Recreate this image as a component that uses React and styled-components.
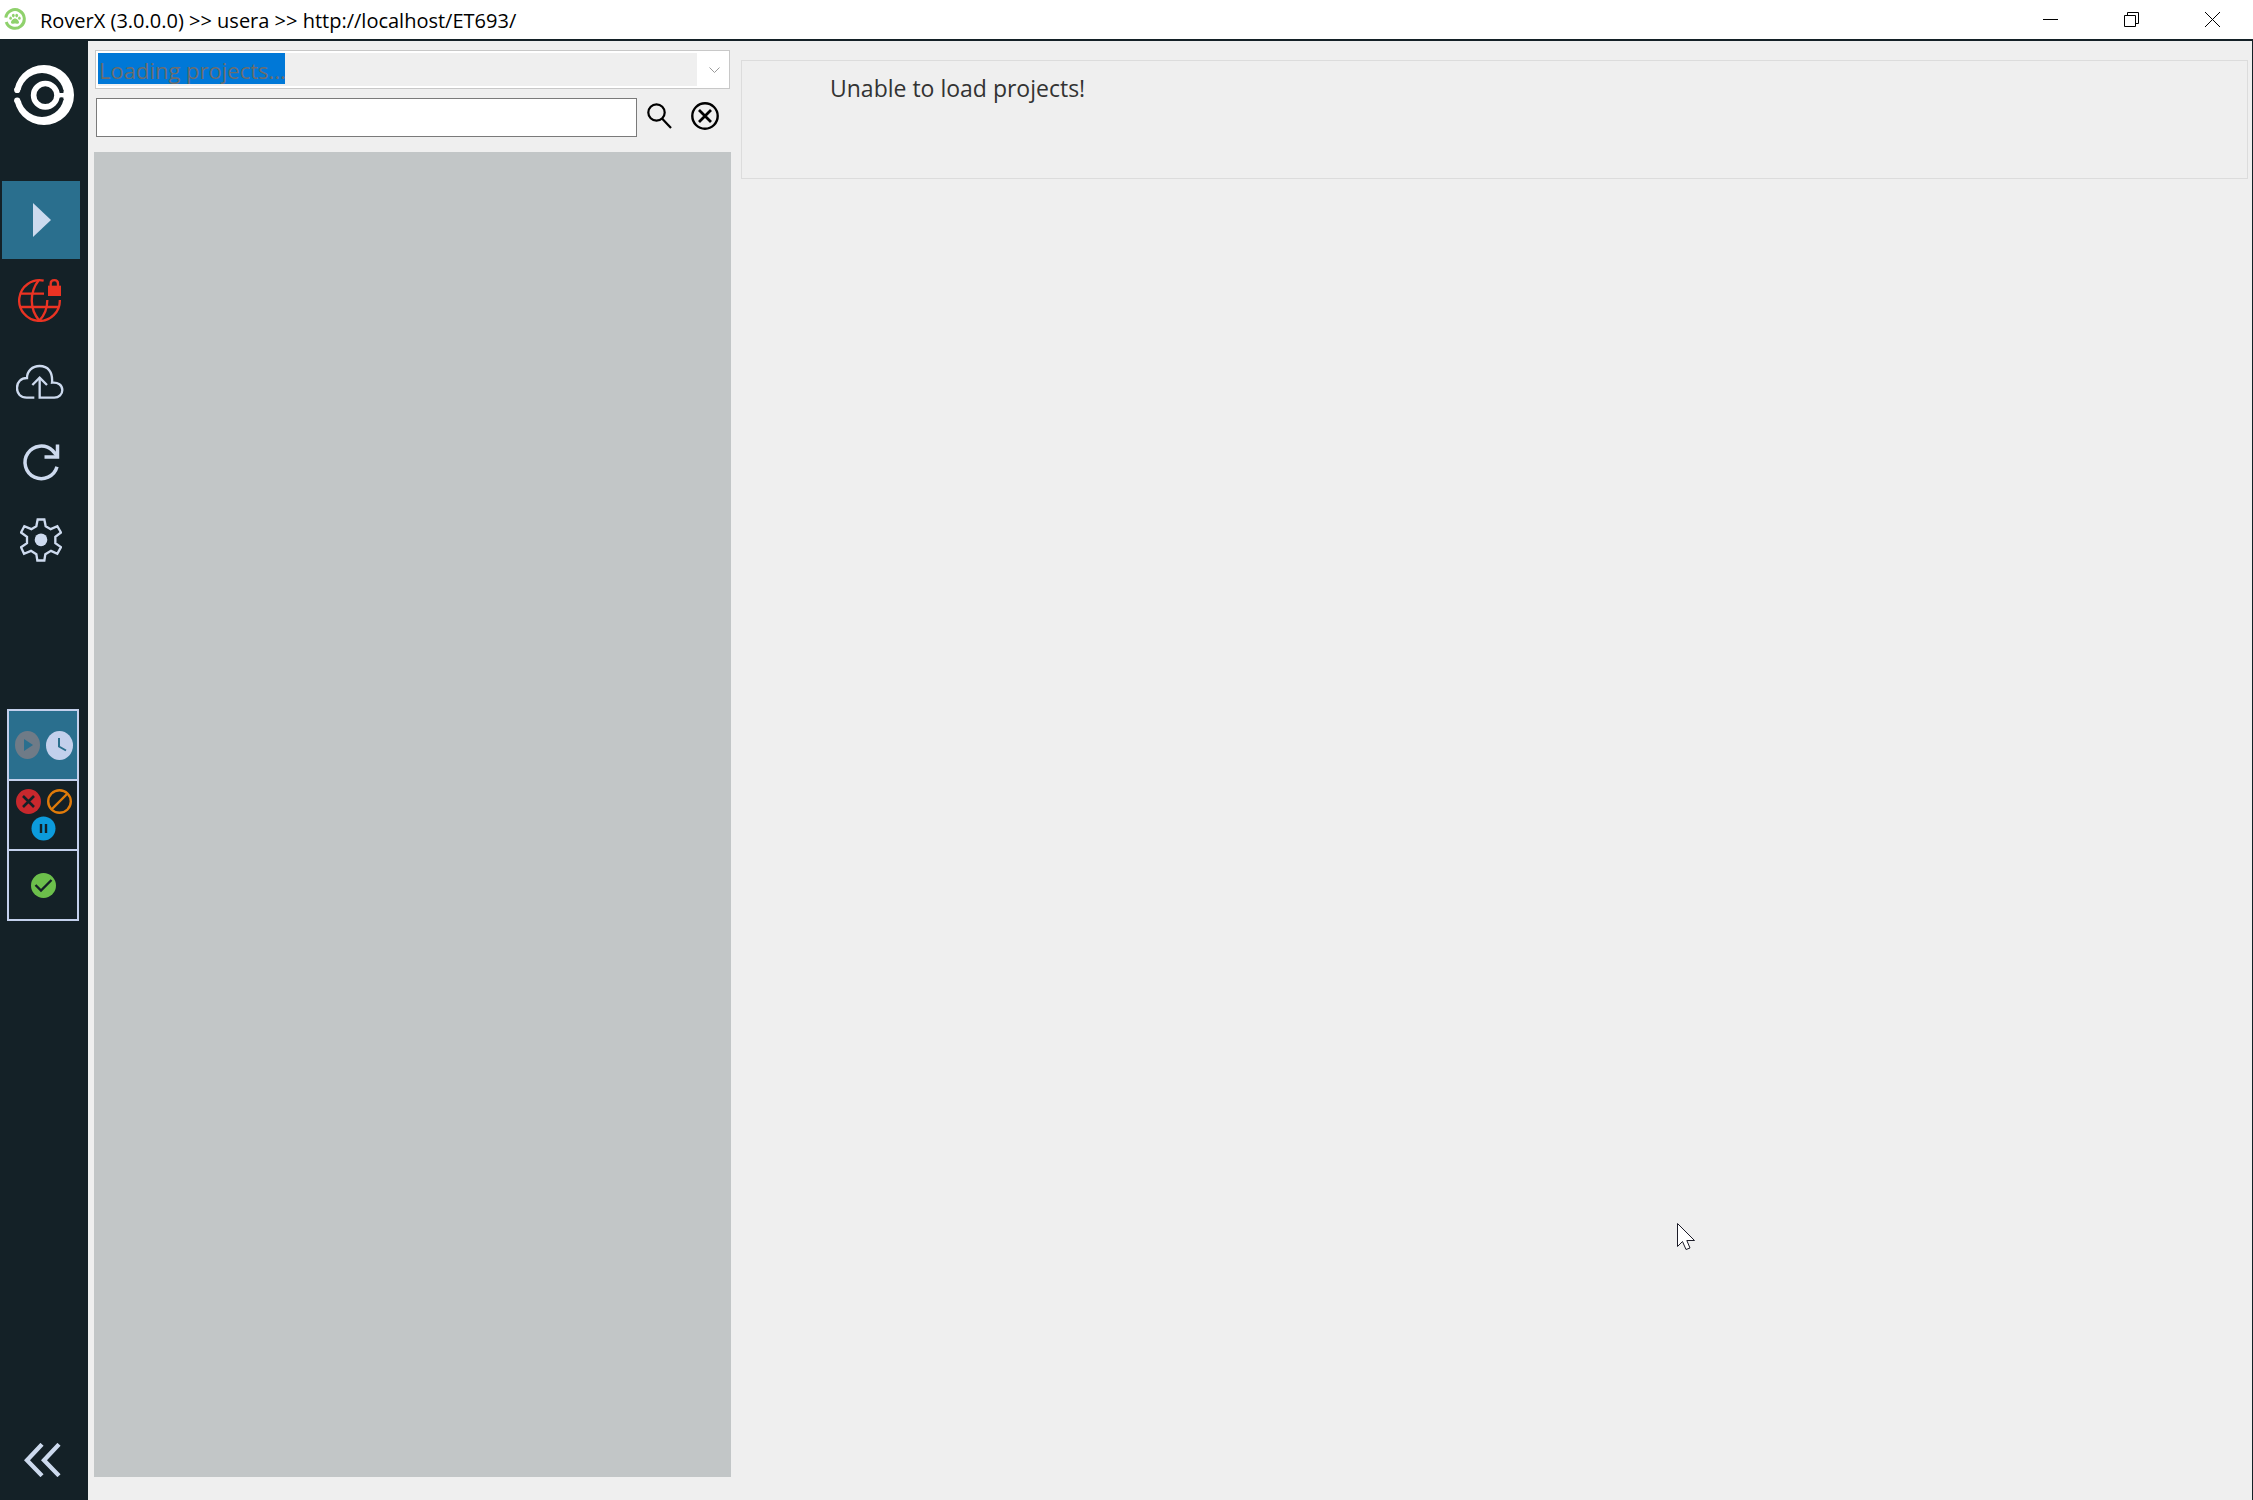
import styled, { createGlobalStyle } from 'styled-components';

const GlobalStyle = createGlobalStyle`
  * {
    box-sizing: border-box;
  }

  body {
    margin: 0;
    font-family: "Open Sans", "Noto Sans", sans-serif;
    background: #efefef;
  }

  button {
    padding: 0;
    border: 0;
    background: none;
  }

  svg {
    display: block;
  }
`;

const Window = styled.div`
  display: flex;
  flex-direction: column;
  min-height: 100vh;
`;

const TitleBar = styled.header`
  display: flex;
  align-items: center;
  height: 41px;
  padding-left: 4px;
  background: #fff;
  border-bottom: 2px solid #142127;
`;

const Title = styled.h1`
  flex: 1;
  margin: 2px 0 0 14px;
  font-size: 20px;
  font-weight: 400;
  line-height: 28px;
  color: #000;
`;

const WindowButton = styled.button`
  display: flex;
  align-items: center;
  justify-content: center;
  width: 81px;
  height: 37px;
`;

const Body = styled.div`
  flex: 1;
  display: flex;
  border-right: 1px solid #142127;
`;

const Sidebar = styled.aside`
  display: flex;
  flex-direction: column;
  width: 88px;
  padding: 24px 0 23px 2px;
  background: #142127;
`;

const Logo = styled.a`
  width: 60px;
  margin: 0 0 56px 12px;
`;

const Nav = styled.nav`
  display: flex;
  flex-direction: column;
  gap: 2px;
`;

const NavButton = styled.button`
  display: flex;
  align-items: center;
  justify-content: center;
  width: 78px;
  height: 78px;
  background: ${(props) => (props.$active ? '#2a6f8e' : 'transparent')};
`;

const Filters = styled.div`
  display: flex;
  flex-direction: column;
  width: 72px;
  margin: 130px 0 0 5px;
  border: 2px solid #c3d0ec;
`;

const FilterButton = styled.button`
  display: flex;
  flex-wrap: wrap;
  align-items: center;
  align-content: center;
  justify-content: center;
  gap: 2px 6px;
  height: 68px;
  padding-left: 1px;
  background: ${(props) => (props.$active ? '#2a6f8e' : 'transparent')};

  & + & {
    height: 70px;
    border-top: 2px solid #c3d0ec;
  }
`;

const CollapseButton = styled.button`
  width: 37px;
  margin: auto 0 0 22px;
`;

const Projects = styled.section`
  display: flex;
  flex-direction: column;
  width: 643px;
  padding: 9px 0 23px 6px;
`;

const Combo = styled.div`
  position: relative;
  margin: 0 1px 9px;
`;

const ProjectSelect = styled.select`
  display: block;
  width: 100%;
  height: 39px;
  padding: 0 40px 0 3px;
  border: 1px solid #c8c8c8;
  border-radius: 0;
  appearance: none;
  font-family: inherit;
  font-size: 22px;
  line-height: 32px;
  color: #6d6d6d;
  opacity: 1;
  background:
    linear-gradient(#0078d7, #0078d7) 2px 2px / 187px 31px no-repeat,
    linear-gradient(#efefef, #efefef) 2px 2px / calc(100% - 34px) 33px no-repeat,
    #fff;
`;

const ComboArrow = styled.svg`
  position: absolute;
  top: 17px;
  right: 10px;
  pointer-events: none;
`;

const SearchRow = styled.form`
  display: flex;
  height: 39px;
  margin: 0 4px 15px 2px;
`;

const SearchInput = styled.input`
  flex: 1;
  min-width: 0;
  padding: 0 6px;
  border: 1px solid #7a7a7a;
  font-family: inherit;
  font-size: 22px;
  background: #fff;
`;

const SearchButton = styled.button`
  display: flex;
  align-items: center;
  justify-content: center;
  width: 45px;
  height: 36px;
`;

const ProjectList = styled.div`
  flex: 1;
  background: #c2c6c7;
`;

const Content = styled.main`
  flex: 1;
  padding: 19px 4px 0 10px;
`;

const Message = styled.div`
  min-height: 119px;
  padding: 11px 88px;
  border: 1px solid #dcdcdc;
`;

const MessageText = styled.p`
  margin: 0;
  font-size: 23px;
  line-height: 32px;
  color: #333;
`;

const Pointer = styled.svg`
  position: absolute;
  top: 1222px;
  left: 1676px;
  pointer-events: none;
`;

const AppIcon = () => (
  <svg width="22" height="24" viewBox="0 0 22 24" fill="#8fd16c" aria-hidden="true">
    <path d="M1.8 9.6A9.3 9.3 0 1 1 2.2 14" fill="none" stroke="#8fd16c" strokeWidth="3" />
    <ellipse cx="6.6" cy="10.2" rx="1.3" ry="1.6" />
    <ellipse cx="9.3" cy="7.6" rx="1.4" ry="1.8" />
    <ellipse cx="12.7" cy="7.6" rx="1.4" ry="1.8" />
    <ellipse cx="15.4" cy="10.2" rx="1.3" ry="1.6" />
    <path d="M11 10.4c2 0 4 2.4 4 4 0 1.6-2.5 1.2-4 1.2s-4 .4-4-1.2c0-1.6 2-4 4-4z" />
  </svg>
);

const LogoIcon = () => (
  <svg width="60" height="60" viewBox="0 0 60 60" fill="#fff" aria-hidden="true">
    <path
      fillRule="evenodd"
      d="M30 0a30 30 0 1 1 0 60a30 30 0 1 1 0-60zM28 8a22 22 0 1 0 0 44a22 22 0 1 0 0-44z"
    />
    <path d="M-1 25H9V35.5H-1z" fill="#142127" />
    <circle cx="3.2" cy="25" r="3.1" />
    <circle cx="3.2" cy="35.5" r="3.1" />
    <path d="M42 26.5L46 28H49.5V26H54V34H49.5V32.5H46L42 34z" />
    <circle cx="47.5" cy="26" r="2" fill="#142127" />
    <circle cx="47.5" cy="34.5" r="2" fill="#142127" />
    <circle cx="31.3" cy="30.2" r="11.7" fill="none" stroke="#fff" strokeWidth="5.6" />
  </svg>
);

const PlayIcon = () => (
  <svg width="20" height="34" viewBox="-2 0 20 34" aria-hidden="true">
    <path d="M0 0L18 17L0 34z" fill="#cddaee" />
  </svg>
);

const GlobeLockIcon = () => (
  <svg width="47" height="43" viewBox="0 0 141 129" fill="none" stroke="#ea3323" strokeWidth="7" aria-hidden="true">
    <path d="M77 5A61 61 0 1 0 125.5 63M78 44H8M5 84H124" />
    <path d="M62 4C34 40 34 90 64 125M88 63C88 90 80 108 64 125" />
    <rect x="90" y="20" width="39" height="31" stroke="none" fill="#ea3323" />
    <path d="M98 22V14C98 0 120 0 120 14V22" />
  </svg>
);

const CloudUploadIcon = () => (
  <svg width="51" height="38" viewBox="0 -12 153 114" fill="none" stroke="#cddaee" strokeWidth="7" aria-hidden="true">
    <path d="M55 98H32C14 98 3 86 3 69C3 51 15 39 33 39C33 18 49 3 71 3C95 3 111 20 108 53C126 51 139 60 139 75C139 88 129 98 115 98H71V38" />
    <path d="M49 60L71 38L93 60" />
  </svg>
);

const RefreshIcon = () => (
  <svg width="42" height="45" viewBox="0 -3 42 45" fill="none" stroke="#cddaee" strokeWidth="3.5" aria-hidden="true">
    <path d="M37 25.8A16.3 16.3 0 1 1 32.5 9.5L37 14.5" />
    <path d="M37.5 3.5V16H24.5" />
  </svg>
);

const GearIcon = () => (
  <svg width="42" height="44" viewBox="0 0 126 131" fill="none" stroke="#cddaee" strokeWidth="7" aria-hidden="true">
    <path d="M53 4H73L77 24L92 33L112 24L123 43L106 56V75L123 87L112 107L93 98L76 108L73 127H52L49 108L33 98L12 107L3 87L21 75V56L3 43L13 24L34 33L49 24Z" />
    <circle cx="63" cy="65" r="19" stroke="none" fill="#cddaee" />
  </svg>
);

const RunningIcon = () => (
  <svg width="25" height="28" viewBox="0 0 25 28" aria-hidden="true">
    <ellipse cx="12.5" cy="14" rx="12.5" ry="14" fill="#6f7b87" />
    <path d="M9 8L18 14L9 20z" fill="#2a6f8e" />
  </svg>
);

const ClockIcon = () => (
  <svg width="27" height="29" viewBox="0 0 27 29" aria-hidden="true">
    <ellipse cx="13.5" cy="14.5" rx="13.5" ry="14.5" fill="#c3d0ec" />
    <path d="M13 7V15.5L20 19.5" fill="none" stroke="#2a6f8e" strokeWidth="2" />
  </svg>
);

const FailedIcon = () => (
  <svg width="25" height="25" viewBox="0 0 25 25" aria-hidden="true">
    <circle cx="12.5" cy="12.5" r="12.5" fill="#c8282d" />
    <path d="M7 7L18 18M18 7L7 18" stroke="#142127" strokeWidth="2.6" />
  </svg>
);

const BlockedIcon = () => (
  <svg width="25" height="25" viewBox="0 0 25 25" fill="none" stroke="#e07b0a" strokeWidth="2.4" aria-hidden="true">
    <circle cx="12.5" cy="12.5" r="11.3" />
    <path d="M4.5 20.5L20.5 4.5" />
  </svg>
);

const PausedIcon = () => (
  <svg width="25" height="25" viewBox="0 0 25 25" aria-hidden="true">
    <circle cx="12.5" cy="12.5" r="12" fill="#0c9bdc" />
    <path d="M10 8V17M15 8V17" stroke="#142127" strokeWidth="2.4" />
  </svg>
);

const PassedIcon = () => (
  <svg width="25" height="25" viewBox="0 0 25 25" aria-hidden="true">
    <circle cx="12.5" cy="12.5" r="12.5" fill="#6cbf4b" />
    <path d="M4.5 12L10 17.5L20.5 7" fill="none" stroke="#142127" strokeWidth="2.4" />
  </svg>
);

const CollapseIcon = () => (
  <svg width="37" height="34" viewBox="0 0 111 102" fill="none" stroke="#cddaee" strokeWidth="13" aria-hidden="true">
    <path d="M54 4L9 52L54 98M105 4L60 52L105 98" />
  </svg>
);

const SearchIcon = () => (
  <svg width="25" height="26" viewBox="0 0 25 26" fill="none" stroke="#000" strokeWidth="2.2" aria-hidden="true">
    <circle cx="9.5" cy="9.5" r="8.2" />
    <path d="M15 15.5L24 25" />
  </svg>
);

const ClearIcon = () => (
  <svg width="28" height="28" viewBox="0 0 28 28" fill="none" stroke="#000" strokeWidth="2.4" aria-hidden="true">
    <circle cx="14" cy="14" r="12.7" />
    <path d="M8 8L20 20M20 8L8 20" strokeWidth="2.8" />
  </svg>
);

const navItems = [
  { label: 'Run', icon: PlayIcon, active: true },
  { label: 'Connection', icon: GlobeLockIcon },
  { label: 'Upload', icon: CloudUploadIcon },
  { label: 'Refresh', icon: RefreshIcon },
  { label: 'Settings', icon: GearIcon },
];

const filters = [
  { label: 'Pending', icons: [RunningIcon, ClockIcon], active: true },
  { label: 'Not passed', icons: [FailedIcon, BlockedIcon, PausedIcon] },
  { label: 'Passed', icons: [PassedIcon] },
];

const App = () => (
  <>
    <GlobalStyle />
    <Window>
      <TitleBar>
        <AppIcon />
        <Title>RoverX (3.0.0.0) &gt;&gt; usera &gt;&gt; http://localhost/ET693/</Title>
        <WindowButton type="button" aria-label="Minimize">
          <svg width="15" height="15" viewBox="0 0 15 15" aria-hidden="true">
            <path d="M0 7.5H15" stroke="#000" />
          </svg>
        </WindowButton>
        <WindowButton type="button" aria-label="Restore">
          <svg width="15" height="15" viewBox="0 0 15 15" fill="none" stroke="#000" aria-hidden="true">
            <path d="M.5 3.5H11.5V14.5H.5zM3.5 3.5V.5H14.5V11.5H11.5" />
          </svg>
        </WindowButton>
        <WindowButton type="button" aria-label="Close">
          <svg width="15" height="15" viewBox="0 0 15 15" stroke="#000" aria-hidden="true">
            <path d="M0 0L15 15M15 0L0 15" />
          </svg>
        </WindowButton>
      </TitleBar>
      <Body>
        <Sidebar>
          <Logo href="#" aria-label="Home">
            <LogoIcon />
          </Logo>
          <Nav>
            {navItems.map(({ label, icon: Icon, active }) => (
              <NavButton key={label} type="button" aria-label={label} $active={active}>
                <Icon />
              </NavButton>
            ))}
          </Nav>
          <Filters>
            {filters.map(({ label, icons, active }) => (
              <FilterButton key={label} type="button" aria-label={label} $active={active}>
                {icons.map((Icon, index) => (
                  <Icon key={index} />
                ))}
              </FilterButton>
            ))}
          </Filters>
          <CollapseButton type="button" aria-label="Collapse menu">
            <CollapseIcon />
          </CollapseButton>
        </Sidebar>
        <Projects>
          <Combo>
            <ProjectSelect aria-label="Project" disabled>
              <option>Loading projects...</option>
            </ProjectSelect>
            <ComboArrow width="11" height="7" viewBox="0 0 11 7" aria-hidden="true">
              <path d="M.5 .5L5.5 5.5L10.5 .5" fill="none" stroke="#999" />
            </ComboArrow>
          </Combo>
          <SearchRow>
            <SearchInput type="text" aria-label="Search projects" />
            <SearchButton type="submit" aria-label="Search">
              <SearchIcon />
            </SearchButton>
            <SearchButton type="reset" aria-label="Clear search">
              <ClearIcon />
            </SearchButton>
          </SearchRow>
          <ProjectList />
        </Projects>
        <Content>
          <Message role="alert">
            <MessageText>Unable to load projects!</MessageText>
          </Message>
        </Content>
      </Body>
    </Window>
    <Pointer width="20" height="30" viewBox="0 0 20 30" aria-hidden="true">
      <path
        d="M1.5 1.5V24.5L6.5 19.5L10 27.5L14 26L10.8 18.5H18.5z"
        fill="#fff"
        stroke="#1c1c28"
      />
    </Pointer>
  </>
);

export default App;
